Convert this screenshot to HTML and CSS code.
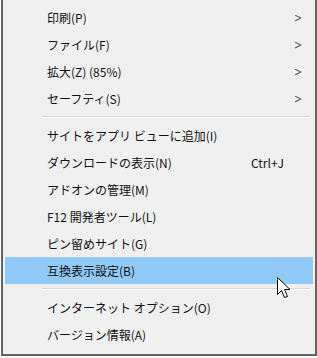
FILE: index.html
```html
<!DOCTYPE html>
<html lang="ja">
<head>
    <meta charset="UTF-8">
    <title>Menu</title>
    <link rel="stylesheet" href="styles.css">
</head>
<body>
    <div class="menu">
        <div class="item"><span class="label">印刷(P)</span><span class="arrow">&gt;</span></div>
        <div class="item"><span class="label">ファイル(F)</span><span class="arrow">&gt;</span></div>
        <div class="item"><span class="label">拡大(Z) (85%)</span><span class="arrow">&gt;</span></div>
        <div class="item"><span class="label">セーフティ(S)</span><span class="arrow">&gt;</span></div>
        <div class="separator"></div>
        <div class="item"><span class="label">サイトをアプリ ビューに追加(I)</span></div>
        <div class="item"><span class="label">ダウンロードの表示(N)</span><span class="shortcut">Ctrl+J</span></div>
        <div class="item"><span class="label">アドオンの管理(M)</span></div>
        <div class="item"><span class="label">F12 開発者ツール(L)</span></div>
        <div class="item"><span class="label">ピン留めサイト(G)</span></div>
        <div class="item selected"><span class="label">互換表示設定(B)</span>
            <svg class="cursor" width="16" height="24" viewBox="0 0 16 24">
                <path d="M1.5 1.5 L1.5 18.5 L5.5 14.5 L8.5 21.5 L11.5 20.5 L8.5 13.5 L14 13.5 Z" fill="#fff" stroke="#000" stroke-width="1"/>
            </svg>
        </div>
        <div class="separator"></div>
        <div class="item"><span class="label">インターネット オプション(O)</span></div>
        <div class="item"><span class="label">バージョン情報(A)</span></div>
    </div>
</body>
</html>
```

FILE: styles.css
```css
* {
    margin: 0;
    padding: 0;
    box-sizing: border-box;
}

body {
    background-color: #ffffff;
    font-family: "Noto Sans CJK JP", "Noto Sans", sans-serif;
    font-size: 12px;
    color: #111111;
}

.menu {
    width: 316px;
    height: 356px;
    margin-left: 1px;
    background-color: #f0f0f0;
    border: 2px solid #646464;
    border-top: none;
    padding: 4px 2px 0 2px;
}

.item {
    position: relative;
    display: flex;
    align-items: center;
    height: 27px;
    padding-left: 42px;
    padding-right: 10px;
}

.label {
    flex: 1;
    white-space: nowrap;
}

.arrow {
    font-family: "DejaVu Sans", sans-serif;
    font-size: 12px;
    color: #555;
    transform: scaleX(0.8);
}

.shortcut {
    margin-right: 19px;
}

.selected {
    background-color: #91c9f7;
}

.separator {
    height: 1px;
    background-color: #d7d7d7;
    margin: 4px 3px 4px 37px;
    border-bottom: 1px solid #ffffff;
    box-sizing: content-box;
}

.cursor {
    position: absolute;
    left: 271px;
    top: 19px;
}
```
